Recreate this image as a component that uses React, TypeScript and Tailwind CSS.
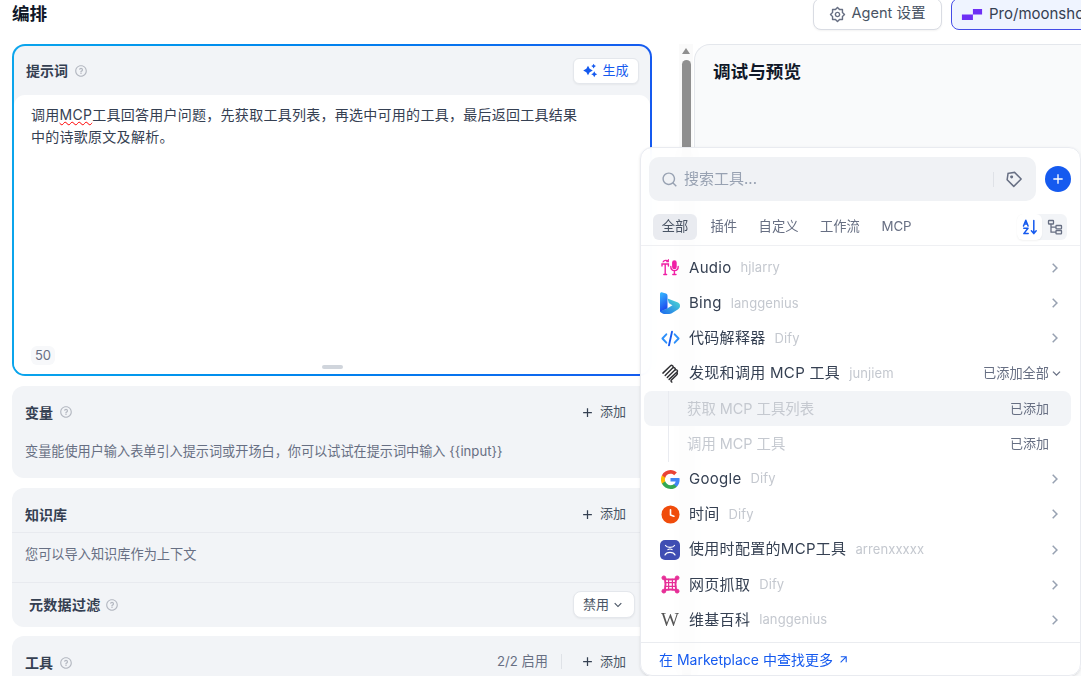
import React from 'react';
import {
  RiAddLine,
  RiArrowDownSLine,
  RiArrowRightSLine,
  RiArrowRightUpLine,
  RiPriceTag3Line,
  RiQuestionLine,
  RiSearchLine,
  RiSettings2Line,
  RiSparkling2Fill,
} from 'react-icons/ri';

const FONT = 'font-[Inter,"Noto_Sans_CJK_SC",sans-serif]';

const AudioIcon = () => (
  <svg viewBox="0 0 20 20" className="h-5 w-5" fill="none" stroke="#f01fa5" strokeWidth="1.4" strokeLinecap="round">
    <path d="M2 8V6h6.400v2M5.200 6v10.500M3.800 16.500h2.800" />
    <path d="M3 4C4 2 7 1.800 8.200 3.400M8.400 1.600v2H6.600" strokeWidth="1.100" />
    <rect x="12.800" y="3" width="3.200" height="7.500" rx="1.600" fill="#f01fa5" />
    <path d="M10.800 8.500c0 5.500 7.400 5.500 7.400 0M14.400 13v3.500M12.800 16.500h3.200" />
  </svg>
);

const BingIcon = () => (
  <svg viewBox="0 0 20 22" className="h-[22px] w-5">
    <defs>
      <linearGradient id="bingA" x1="0" y1="0" x2="0.3" y2="1">
        <stop offset="0" stopColor="#37bdff" />
        <stop offset="1" stopColor="#1b48ef" />
      </linearGradient>
      <linearGradient id="bingB" x1="0" y1="1" x2="1" y2="0">
        <stop offset="0" stopColor="#1b66ef" />
        <stop offset="1" stopColor="#4fe0d0" />
      </linearGradient>
    </defs>
    <path d="M0 2C0 .6 1.200 0 2.400.400L6 1.600C7.200 2 7.500 3 7.500 4v12.500L0 20z" fill="url(#bingA)" />
    <path d="M7.500 6.500 18 10.600c1.600.8 2 1.800 2 3.400 0 1.600-1 2.800-2.600 3.800l-5.600 3.400C8 22.800 2.500 22.800 0 19.500l7.500-3.300 5-3-1.500-.7-2.200-1.400z" fill="url(#bingB)" />
  </svg>
);

const CodeIcon = () => (
  <svg viewBox="0 0 20 20" className="h-[19px] w-[19px]" fill="none" stroke="#2e90fa" strokeWidth="2" strokeLinecap="round" strokeLinejoin="round">
    <path d="M5.600 5.600 1.500 10l4.100 4.400M14.400 5.600 18.500 10l-4.100 4.400" />
    <path d="M11.600 2.800 8.400 17.200" stroke="#155aef" />
  </svg>
);

const McpIcon = () => (
  <svg viewBox="0 0 20 20" className="h-[19px] w-[19px]" fill="none" stroke="#2f2f33" strokeWidth="1.500" strokeLinecap="round" strokeLinejoin="round">
    <path d="M2 9.600 9.800 2c1.400-1.300 3.400-.3 3 1.600" />
    <path d="M4.400 12 12.200 4.200c1.400-1.200 3.400 0 2.800 1.800" />
    <path d="M6.600 14.200 14.600 6.400c1.400-1.200 3.400.2 2.600 2" />
    <path d="M8.600 16.200 16.600 8.600c1 1.200.6 2.200-.2 3l-5.400 5.200c-.8.8-.5 1.600.4 2.200" />
  </svg>
);

const GoogleIcon = () => (
  <svg viewBox="0 0 24 24" className="h-[19px] w-[19px]">
    <path fill="#4285f4" d="M23.500 12.300c0-.8-.1-1.600-.2-2.300H12v4.500h6.500c-.3 1.500-1.100 2.800-2.400 3.600v3h3.900c2.200-2.100 3.500-5.100 3.500-8.800z" />
    <path fill="#34a853" d="M12 24c3.200 0 6-1.100 8-2.900l-3.900-3c-1.100.7-2.500 1.200-4.100 1.200-3.100 0-5.800-2.100-6.700-5H1.200v3.100C3.200 21.300 7.300 24 12 24z" />
    <path fill="#fbbc05" d="M5.300 14.300c-.5-1.500-.5-3.100 0-4.600V6.600H1.200c-1.700 3.400-1.700 7.400 0 10.800z" />
    <path fill="#ea4335" d="M12 4.800c1.800 0 3.300.6 4.600 1.800l3.400-3.400C17.900 1.200 15.200 0 12 0 7.300 0 3.200 2.700 1.200 6.600l4.100 3.100c.9-2.800 3.600-4.900 6.700-4.900z" />
  </svg>
);

const ClockIcon = () => (
  <svg viewBox="0 0 20 20" className="h-[19px] w-[19px]">
    <circle cx="10" cy="10" r="9.500" fill="#f04c0b" />
    <path d="M10 5v5.400l3.600 1.400" fill="none" stroke="#fff" strokeWidth="1.700" strokeLinecap="round" strokeLinejoin="round" />
  </svg>
);

const ArrenIcon = () => (
  <svg viewBox="0 0 20 20" className="h-5 w-5">
    <rect width="20" height="20" rx="5" fill="#3f4db3" />
    <path d="M5.500 5.500c1.500 2.400 7.500 2.400 9 0M8 9.600c1-.6 3-.6 4 0M5 15c1.500-3.400 8.500-3.400 10 0" fill="none" stroke="#fff" strokeWidth="1.200" strokeLinecap="round" />
  </svg>
);

const ScrapeIcon = () => (
  <svg viewBox="0 0 20 20" className="h-[19px] w-[19px]" fill="#e62f97" stroke="#e62f97">
    <path d="M3.500 4c4 1 9 1 13 0M3.500 16c4-1 9-1 13 0M4 3.500c1 4 1 9 0 13M16 3.500c-1 4-1 9 0 13" fill="none" strokeWidth="2" />
    <path d="M4 8h12M4 12h12M8 4v12M12 4v12" fill="none" strokeWidth="1.300" />
    <circle cx="3" cy="3" r="2" />
    <circle cx="17" cy="3" r="2" />
    <circle cx="3" cy="17" r="2" />
    <circle cx="17" cy="17" r="2" />
  </svg>
);

const SortIcon = () => (
  <svg viewBox="0 0 16 16" className="h-4 w-4" fill="none" stroke="#155aef" strokeWidth="1.500" strokeLinecap="round" strokeLinejoin="round">
    <path d="M1.500 7 3.800 1.200 6.100 7M2.400 5h2.800" />
    <path d="M1.800 9.200h4.200L1.800 14.600h4.400" />
    <path d="M11.800 1.500v13M9.400 11.800l2.400 2.800 2.400-2.800" />
  </svg>
);

const TreeIcon = () => (
  <svg viewBox="0 0 16 16" className="h-4 w-4" fill="none" stroke="#676f83" strokeWidth="1.300" strokeLinejoin="round">
    <rect x="1.500" y="1.500" width="5" height="3.500" rx=".6" />
    <rect x="9" y="6.500" width="5.500" height="3.300" rx=".6" />
    <rect x="9" y="11.500" width="5.500" height="3.300" rx=".6" />
    <path d="M4 5v8.200h5M4 8.200h5" />
  </svg>
);

const Help = () => <RiQuestionLine className="h-[14px] w-[14px] text-[#b4b8c1]" />;

const AddButton = () => (
  <div className="flex items-center gap-[5px] text-[13px] text-[#495464]">
    <RiAddLine className="h-[15px] w-[15px] text-[#354052]" />
    添加
  </div>
);

const tools = [
  { name: 'Audio', author: 'hjlarry', icon: <AudioIcon /> },
  { name: 'Bing', author: 'langgenius', icon: <BingIcon /> },
  { name: '代码解释器', author: 'Dify', icon: <CodeIcon /> },
];

const moreTools = [
  { name: 'Google', author: 'Dify', icon: <GoogleIcon /> },
  { name: '时间', author: 'Dify', icon: <ClockIcon /> },
  { name: '使用时配置的MCP工具', author: 'arrenxxxxx', icon: <ArrenIcon /> },
  { name: '网页抓取', author: 'Dify', icon: <ScrapeIcon /> },
  {
    name: '维基百科',
    author: 'langgenius',
    icon: <span className="font-['Liberation_Serif',serif] text-[19px] leading-none text-[#555]">W</span>,
  },
];

const ToolName = ({ icon, name, author }: { icon: React.ReactNode; name: string; author: string }) => (
  <div className="flex items-center">
    <div className="flex w-[20px] items-center justify-center">{icon}</div>
    <span className="ml-[9px] text-[15px] tracking-[0.3px] text-[#354052]">{name}</span>
    <span className="ml-[9px] text-[13px] tracking-[0.1px] text-[#c4c8cf]">{author}</span>
  </div>
);

const ToolRow = ({ icon, name, author }: { icon: React.ReactNode; name: string; author: string }) => (
  <div className="flex h-[35.2px] items-center justify-between pl-[19px] pr-[16px]">
    <ToolName icon={icon} name={name} author={author} />
    <RiArrowRightSLine className="h-[18px] w-[18px] text-[#98a2b2]" />
  </div>
);

const SubRow = ({ name, hover }: { name: string; hover?: boolean }) => (
  <div className={`ml-[3px] mr-[9px] flex h-[35.2px] items-center justify-between rounded-lg pl-[43px] pr-[22px] ${hover ? 'bg-[#f2f4f7]' : ''}`}>
    <span className="text-[14.400px] text-[#c5c9d0]">{name}</span>
    <span className="text-[13px] text-[#676f83]">已添加</span>
  </div>
);

export default function App() {
  return (
    <div className={`relative flex h-[676px] w-[1081px] flex-col overflow-hidden bg-white ${FONT}`}>
      {/* Header */}
      <div className="flex h-[44px] shrink-0 items-start justify-between pl-3">
        <h1 className="mt-[1px] text-[17.600px] font-bold leading-[26px] text-[#101828]">编排</h1>
        <div className="-mt-[2px] flex w-[268px] shrink-0 gap-[9px]">
          <div className="flex h-[32px] w-[129px] shrink-0 items-center justify-center gap-[5px] rounded-lg border border-[#d9dce3] bg-white text-[14.600px] text-[#495464] shadow-xs">
            <RiSettings2Line className="h-[17px] w-[17px] text-[#676f83]" />
            Agent 设置
          </div>
          <div className="flex h-[32px] w-[200px] shrink-0 items-center gap-[6px] rounded-lg border border-[#444ce7] bg-[#eff4ff] pl-[9px] text-[15px] text-[#354052]">
            <svg viewBox="0 0 22 12" className="h-[11px] w-[22px] shrink-0" fill="#6e2ff5">
              <path d="M0 6h12V0h10v6H12v6H0z" />
            </svg>
            <span className="whitespace-nowrap">Pro/moonshotai</span>
          </div>
        </div>
      </div>

      <div className="flex min-h-0 flex-1">
        {/* Left column */}
        <div className="ml-3 flex w-[640px] shrink-0 flex-col">
          <div className="h-[332px] shrink-0 rounded-[13px] bg-gradient-to-r from-[#0ba5ec] to-[#155aef] p-[2px]">
            <div className="flex h-full flex-col rounded-[11px] bg-[#f2f4f7]">
              <div className="flex h-[49px] shrink-0 items-center justify-between pl-3 pr-[11px]">
                <div className="flex items-center gap-[6px] text-[14px] font-semibold text-[#354052]">
                  提示词
                  <Help />
                </div>
                <div className="flex h-[26px] w-[66px] items-center justify-center gap-1 rounded-md border border-[#e4e7ec] bg-white text-[13px] text-[#155aef] shadow-xs">
                  <RiSparkling2Fill className="h-[15px] w-[15px]" />
                  生成
                </div>
              </div>
              <div className="relative flex flex-1 flex-col justify-between rounded-[11px] bg-white pb-[9px] pl-[17px] pt-[9px]">
                <p className="text-sm leading-[22px] tracking-[0.27px] text-[#354052]">
                  调用<span className="underline decoration-[#f00] decoration-wavy decoration-[1.200px]">MCP</span>工具回答用户问题，先获取工具列表，再选中可用的工具，最后返回工具结果
                  <br />
                  中的诗歌原文及解析。
                </p>
                <span className="flex h-[19px] w-[24px] items-center justify-center rounded-md bg-[#f7f8fa] text-[13px] text-[#676f83]">50</span>
                <div className="absolute bottom-[5px] left-[308px] h-[4px] w-[21px] rounded-full bg-[#d0d5dc]" />
              </div>
            </div>
          </div>

          <div className="mt-[10px] flex h-[92px] shrink-0 flex-col rounded-xl bg-[#f2f4f7] pl-[13px] pr-[26px]">
            <div className="mt-[16px] flex h-[20px] items-center justify-between">
              <div className="flex items-center gap-[6px] text-[14px] font-semibold text-[#354052]">
                变量
                <Help />
              </div>
              <AddButton />
            </div>
            <p className="mt-[19px] whitespace-nowrap text-[13.150px] leading-[20px] text-[#676f83]">
              变量能使用户输入表单引入提示词或开场白，你可以试试在提示词中输入 {'{{input}}'}
            </p>
          </div>

          <div className="mt-[10px] flex h-[139px] shrink-0 flex-col rounded-xl bg-[#f2f4f7]">
            <div className="flex h-[45px] shrink-0 items-center justify-between border-b border-[#e8eaef] pl-[13px] pr-[26px] pt-[8px]">
              <span className="text-[14px] font-semibold text-[#354052]">知识库</span>
              <AddButton />
            </div>
            <div className="flex h-[50px] shrink-0 items-center border-b border-[#e8eaef] pb-[6px] pl-[13px] text-[13.200px] text-[#676f83]">
              您可以导入知识库作为上下文
            </div>
            <div className="flex flex-1 items-center justify-between pb-[1px] pl-[17px] pr-[17px]">
              <div className="flex items-center gap-[4px] text-[14px] font-semibold tracking-[0.3px] text-[#354052]">
                元数据过滤
                <Help />
              </div>
              <div className="flex h-[27px] w-[62px] items-center justify-center gap-[2px] rounded-lg border border-[#e4e7ec] bg-white text-[13px] text-[#495464] shadow-xs">
                禁用
                <RiArrowDownSLine className="h-[14px] w-[14px]" />
              </div>
            </div>
          </div>

          <div className="mt-[9px] flex h-[60px] shrink-0 items-start justify-between rounded-xl bg-[#f2f4f7] pl-[13px] pr-[26px] pt-[16px]">
            <div className="flex items-center gap-[6px] text-[14px] font-semibold text-[#354052]">
              工具
              <Help />
            </div>
            <div className="flex items-center text-[13.200px] text-[#676f83]">
              2/2 启用
              <div className="ml-[13px] mr-[18px] h-[15px] w-px bg-[#dfe2e7]" />
              <AddButton />
            </div>
          </div>
        </div>

        {/* Scrollbar */}
        <div className="ml-[27px] flex h-full w-[14px] shrink-0 flex-col items-center bg-[#fafafa]">
          <div className="mt-[4px] h-0 w-0 border-x-[4px] border-b-[6px] border-x-transparent border-b-[#8f8f8f]" />
          <div className="mt-[6px] w-[9px] flex-1 rounded-t-full bg-[#8f8f8f]" />
        </div>

        {/* Debug panel */}
        <div className="ml-px flex-1 rounded-tl-2xl border-l border-t border-[#e4e7ec] bg-[#f9fafb] pl-[18px] pt-[14px]">
          <h2 className="text-[17.600px] font-bold leading-[26px] text-[#101828]">调试与预览</h2>
        </div>
      </div>

      {/* Tool picker popover */}
      <div className="absolute left-[640px] top-[147px] flex h-[529px] w-[441px] flex-col rounded-xl border border-[#e9ebf0] bg-white/95 shadow-sm backdrop-blur-sm">
        <div className="mt-[9px] flex shrink-0 items-center pl-[8px]">
          <div className="flex h-[44px] w-[387px] items-center rounded-[10px] bg-[#f0f2f5] pl-[12px] pr-[13px]">
            <RiSearchLine className="h-[17px] w-[17px] text-[#98a2b2]" />
            <span className="ml-[6px] flex-1 pt-[1px] text-[15px] text-[#98a2b2]">搜索工具...</span>
            <div className="h-[15px] w-px bg-[#dfe2e7]" />
            <RiPriceTag3Line className="ml-[11px] h-[18px] w-[18px] -scale-x-100 text-[#676f83]" />
          </div>
          <div className="ml-[9px] flex h-[26px] w-[26px] items-center justify-center rounded-full bg-[#155aef]">
            <RiAddLine className="h-[16px] w-[16px] text-white" />
          </div>
        </div>

        <div className="mt-[13px] flex h-[32px] shrink-0 items-start justify-between border-b border-[#eff0f3] pl-[12px] pr-[13px]">
          <div className="flex items-center gap-[5.500px] text-[13.300px] text-[#676f83]">
            <span className="flex h-[26px] w-[44px] items-center justify-center rounded-md bg-[#e9ebf0] text-[#495464]">全部</span>
            <span className="flex h-[26px] items-center px-2">插件</span>
            <span className="flex h-[26px] items-center px-2">自定义</span>
            <span className="flex h-[26px] items-center px-2">工作流</span>
            <span className="flex h-[26px] items-center px-2">MCP</span>
          </div>
          <div className="flex h-[26px] w-[50px] items-center rounded-md bg-[#f2f4f7]">
            <span className="flex h-[26px] w-[25px] items-center justify-center rounded-md bg-white shadow-xs">
              <SortIcon />
            </span>
            <span className="flex h-[26px] w-[25px] items-center justify-center">
              <TreeIcon />
            </span>
          </div>
        </div>

        <div className="mt-[4.500px] flex flex-1 flex-col">
          {tools.map((t) => (
            <ToolRow key={t.name} {...t} />
          ))}
          <div className="flex h-[35.2px] items-center justify-between pl-[19px] pr-[16px]">
            <ToolName icon={<McpIcon />} name="发现和调用 MCP 工具" author="junjiem" />
            <div className="flex items-center text-[13.200px] text-[#676f83]">
              已添加全部
              <RiArrowDownSLine className="h-[15px] w-[15px]" />
            </div>
          </div>
          <div className="relative">
            <div className="absolute bottom-0 left-[27px] top-0 z-10 w-px bg-[#e9ebf0]" />
            <SubRow name="获取 MCP 工具列表" hover />
            <SubRow name="调用 MCP 工具" />
          </div>
          {moreTools.map((t) => (
            <ToolRow key={t.name} {...t} />
          ))}
        </div>

        <div className="flex h-[33px] shrink-0 items-center gap-[4px] border-t border-[#eaecf0] pl-[18px] text-[14px] text-[#155aef]">
          在 Marketplace 中查找更多
          <RiArrowRightUpLine className="h-[13px] w-[13px]" />
        </div>
      </div>
    </div>
  );
}
